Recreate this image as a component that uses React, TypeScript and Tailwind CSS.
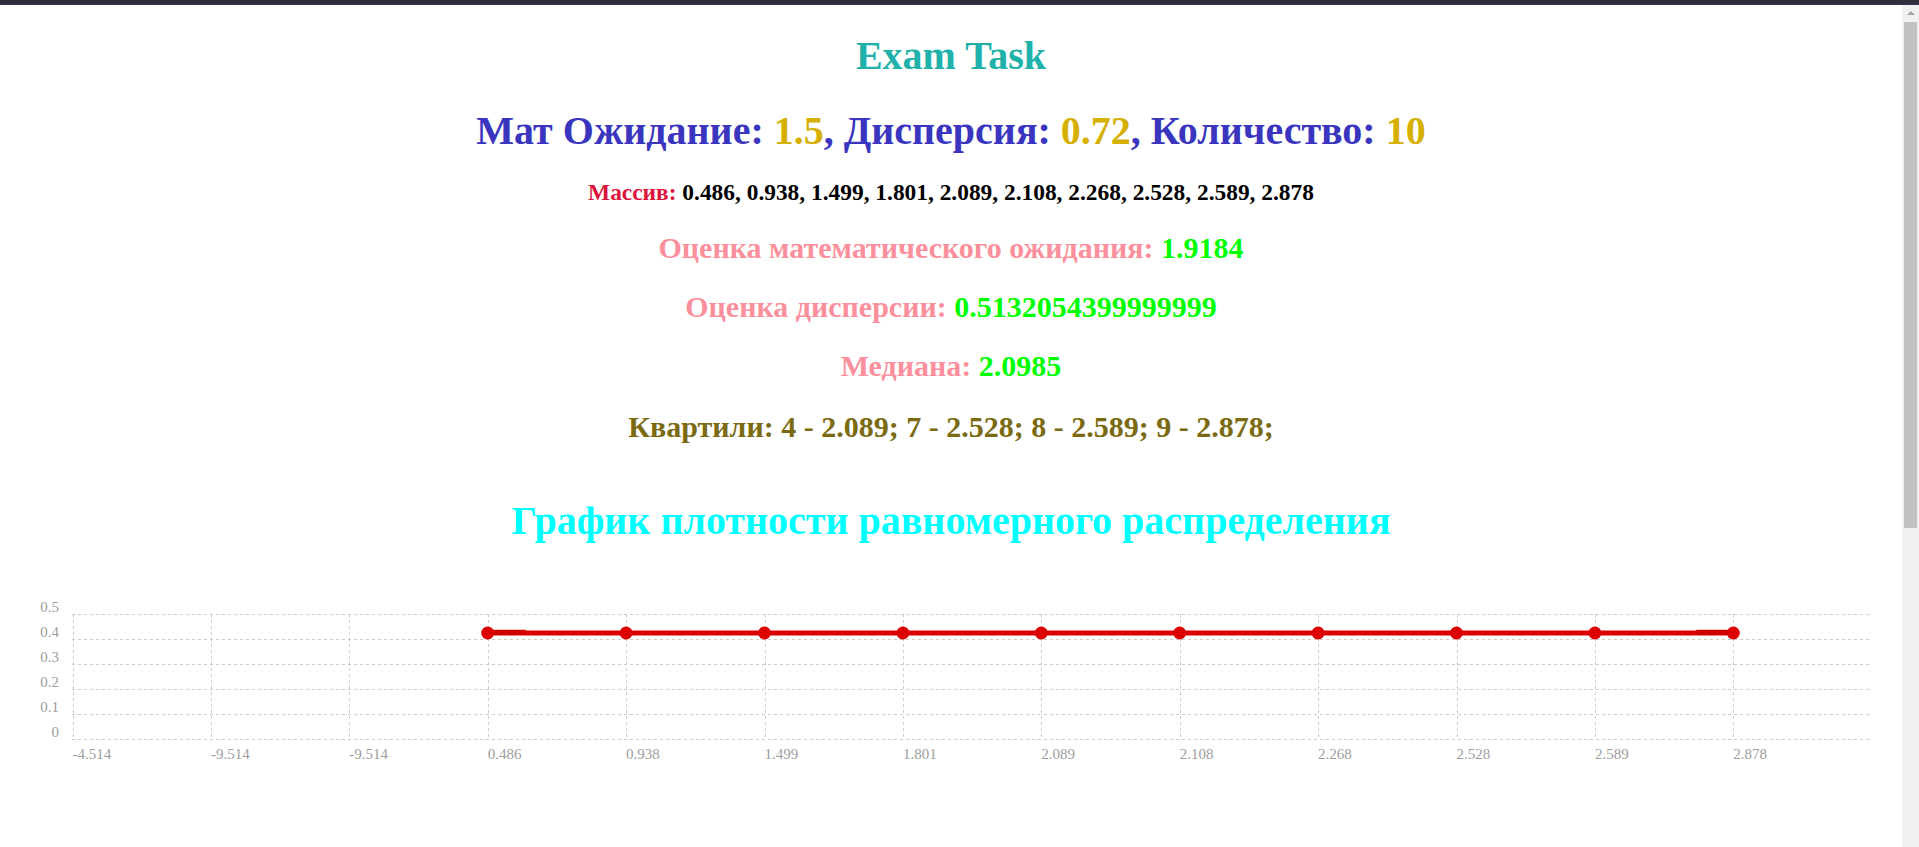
import React from "react";

const xLabels = [
  "-4.514",
  "-9.514",
  "-9.514",
  "0.486",
  "0.938",
  "1.499",
  "1.801",
  "2.089",
  "2.108",
  "2.268",
  "2.528",
  "2.589",
  "2.878",
];
const yLabels = ["0.5", "0.4", "0.3", "0.2", "0.1", "0"];

function Chart() {
  const xs = xLabels.map((_, i) => 72.5 + i * 138.4);
  const yLines = [24, 49, 74, 99, 124, 149];
  const lineY = 43;
  const pts = xs.slice(3);
  return (
    <svg width={1902} height={180} className="block shrink-0 font-normal" style={{ fontFamily: "'Liberation Serif', serif" }}>
      {yLines.map((y) => (
        <line key={"h" + y} x1={72} x2={1871} y1={y + 0.5} y2={y + 0.5} stroke="#cccccc" strokeDasharray="3 3" />
      ))}
      {xs.map((x, i) => (
        <line key={"v" + i} x1={Math.round(x) + 0.5} x2={Math.round(x) + 0.5} y1={24} y2={149} stroke="#cccccc" strokeDasharray="3 3" />
      ))}
      {yLabels.map((t, i) => (
        <text key={"yl" + i} x={59} y={yLines[i] - 7.5} textAnchor="end" dominantBaseline="central" fontSize={15} fontWeight={400} fill="#9d9d9d">
          {t}
        </text>
      ))}
      {xLabels.map((t, i) => (
        <text key={"xl" + i} x={xs[i]} y={163.5} textAnchor="start" dominantBaseline="central" fontSize={15} fontWeight={400} fill="#9d9d9d">
          {t}
        </text>
      ))}
      <polyline points={pts.map((x) => `${x},${lineY}`).join(" ")} fill="none" stroke="#dd0000" strokeWidth={5} />
      <line x1={pts[0]} x2={pts[0] + 38} y1={lineY - 0.8} y2={lineY - 0.8} stroke="#d00000" strokeWidth={5} />
      <line x1={pts[pts.length - 1] - 37} x2={pts[pts.length - 1]} y1={lineY - 0.8} y2={lineY - 0.8} stroke="#d00000" strokeWidth={5} />
      {pts.map((x, i) => (
        <circle key={"c" + i} cx={x} cy={lineY} r={6.5} fill="#dd0000" />
      ))}
    </svg>
  );
}

export default function App() {
  return (
    <div className="flex h-screen w-full flex-col overflow-hidden bg-white">
      <div className="h-[4px] shrink-0 border-b border-[#3b3550] bg-[#2d2f3b] box-content" />
      <div className="flex min-h-0 flex-1">
        <main className="flex min-w-0 flex-1 flex-col items-center pt-[28px] text-center font-bold font-['Liberation_Serif','Times_New_Roman',serif]">
          <div className="text-[40px] leading-[46px] text-[#20b2aa]">Exam Task</div>
          <div className="mt-[29px] text-[40px] leading-[46px] text-[#3a35bf]">
            Мат Ожидание: <span className="text-[#d6b000]">1.5</span>, Дисперсия:{" "}
            <span className="text-[#d6b000]">0.72</span>, Количество: <span className="text-[#d6b000]">10</span>
          </div>
          <div className="mt-[25px] text-[23.4px] leading-[27px] text-black">
            <span className="text-[#dc143c]">Массив:</span> 0.486, 0.938, 1.499, 1.801, 2.089, 2.108, 2.268, 2.528,
            2.589, 2.878
          </div>
          <div className="mt-[24px] text-[30px] leading-[35px] text-[#fb8f9c]">
            Оценка математического ожидания: <span className="text-[#00ff00]">1.9184</span>
          </div>
          <div className="mt-[24px] text-[30px] leading-[35px] text-[#fb8f9c]">
            Оценка дисперсии: <span className="text-[#00ff00]">0.5132054399999999</span>
          </div>
          <div className="mt-[24px] text-[30px] leading-[35px] text-[#fb8f9c]">
            Медиана: <span className="text-[#00ff00]">2.0985</span>
          </div>
          <div className="mt-[26px] text-[30px] leading-[35px] text-[#7b6a12]">
            Квартили: 4 - 2.089; 7 - 2.528; 8 - 2.589; 9 - 2.878;
          </div>
          <div className="mt-[54px] text-[40px] leading-[46px] text-[#00ffff]">
            График плотности равномерного распределения
          </div>
          <div className="mt-[46px] self-stretch">
            <Chart />
          </div>
        </main>
        <div className="flex w-[17px] shrink-0 flex-col items-center bg-[#f1f1f1]">
          <div className="mt-[6px] h-0 w-0 border-x-[4px] border-b-[4px] border-x-transparent border-b-[#a3a3a3]" />
          <div className="mt-[7px] h-[506px] w-[13px] bg-[#c1c1c1]" />
        </div>
      </div>
    </div>
  );
}
